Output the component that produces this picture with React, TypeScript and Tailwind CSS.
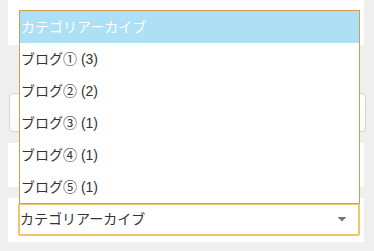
const items = ["ブログ① (3)", "ブログ② (2)", "ブログ③ (1)", "ブログ④ (1)", "ブログ⑤ (1)"];

const font = "font-['Liberation_Sans','Noto_Sans_CJK_JP',sans-serif]";

export default function App() {
  return (
    <div className={`relative h-[251px] w-[374px] overflow-hidden bg-[#efefef] ${font}`}>
      {/* page behind the open select */}
      <div className="flex flex-col">
        <div className="ml-[8px] h-[45px] w-[356px] bg-white" />
        <div className="ml-[9px] mt-[48px] h-[39px] w-[357px] rounded-[4px] border border-[#d4d4d4] bg-gradient-to-b from-white to-[#fafafa]" />
        <div className="ml-[8px] mt-[11px] h-[44px] w-[356px] bg-white" />
        <div className="ml-[8px] mt-[11px] h-[44px] w-[356px] bg-white pl-[10px] pt-[5px]">
          <div className="flex h-[33px] w-[342px] items-center justify-between rounded-[2px] border-2 border-[#f2c46e] bg-white pr-[12px] text-[14px] text-[#333]">
            <span>カテゴリアーカイブ</span>
            <svg width="8" height="5" viewBox="0 0 8 5">
              <rect x="0" y="0" width="8" height="1" fill="#777" />
              <path d="M0.5 1 L7.5 1 L4 4.5 Z" fill="#777" />
            </svg>
          </div>
        </div>
      </div>

      {/* native dropdown list */}
      <div className="absolute left-[19px] top-[10px] w-[341px] border border-[#c9a04f] bg-white text-[14px] text-[#333]">
        <div className="flex h-[32px] items-center bg-[#ade0f5] pl-[1px] text-white">カテゴリアーカイブ</div>
        {items.map((t) => (
          <div key={t} className="flex h-[32px] items-center pl-[1px]">
            {t}
          </div>
        ))}
      </div>
    </div>
  );
}
